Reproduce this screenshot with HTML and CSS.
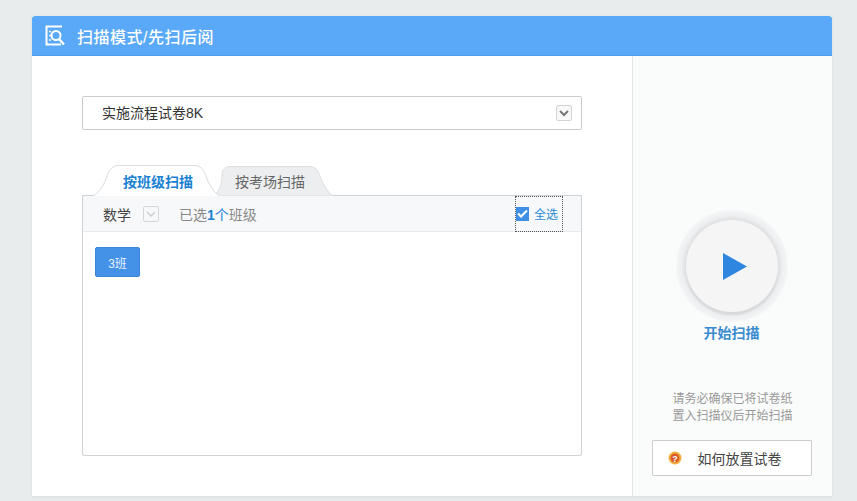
FILE: index.html
```html
<!DOCTYPE html>
<html lang="zh">
<head>
<meta charset="utf-8">
<title>扫描模式</title>
<link rel="stylesheet" href="styles.css">
</head>
<body>
<div class="card">
  <header class="head">
    <svg class="head-icon" width="21" height="21" viewBox="0 0 21 21" fill="none" stroke="#fff">
      <path d="M17 1.500H1.500v18H16" stroke-width="2"/>
      <circle cx="11" cy="10.500" r="4.500" stroke-width="2"/>
      <path d="M14 14l5 5.500" stroke-width="2.400"/>
      <path d="M4 6.500h2M4 10.500h2M4 15h2" stroke-width="1.500"/>
    </svg>
    <h1 class="head-title">扫描模式/先扫后阅</h1>
  </header>
  <div class="body">
    <main class="main">
      <div class="select">
        <span>实施流程试卷8K</span>
        <span class="arrow-box"><svg width="10" height="7" viewBox="0 0 10 7" fill="none" stroke="#777" stroke-width="2"><path d="M1 1l4 4 4-4"/></svg></span>
      </div>
      <div class="tabs">
        <div class="tab tab-idle">
          <svg class="tab-bg" width="120" height="30" viewBox="0 0 120 30"><path d="M0 30C6 26 9 20 9 9 9 3 12 .5 18 .5H96c5 0 8 2 10 7 3 9 7 17 14 22.500z" fill="#eceeef" stroke="#dcdfe1"/></svg>
          <span class="tab-text">按考场扫描</span>
        </div>
        <div class="tab tab-active">
          <svg class="tab-bg" width="126" height="31" viewBox="0 0 126 31"><path d="M0 31C7 27 11 20 14 11 16 4 20 .5 26 .5H101c6 0 9 3 11 8 3 9 7 17 14 22.500" fill="#fff" stroke="#d8dcdf"/></svg>
          <span class="tab-text">按班级扫描</span>
        </div>
      </div>
      <section class="panel">
        <div class="toolbar">
          <span class="subject">数学</span>
          <span class="mini-box"><svg width="10" height="6" viewBox="0 0 10 6" fill="none" stroke="#c9ced2" stroke-width="1.300"><path d="M1 1l4 4 4-4"/></svg></span>
          <span class="count">已选<b class="num">1</b><span class="unit">个</span>班级</span>
          <label class="all">
            <span class="check"><svg width="11" height="9" viewBox="0 0 11 9" fill="none" stroke="#fff" stroke-width="2"><path d="M1 4.500l3 3 6-6"/></svg></span>
            <span>全选</span>
          </label>
        </div>
        <div class="classes"><button class="class-btn">3班</button></div>
      </section>
    </main>
    <aside class="side">
      <div class="ring">
        <div class="disc">
          <svg width="24" height="27" viewBox="0 0 24 27"><path d="M0 0l24 13.500L0 27z" fill="#2f86e0"/></svg>
        </div>
      </div>
      <div class="start">开始扫描</div>
      <p class="note">请务必确保已将试卷纸<br>置入扫描仪后开始扫描</p>
      <button class="howto">
        <svg width="14" height="14" viewBox="0 0 14 14"><circle cx="7" cy="7" r="6.500" fill="#f2b040"/><circle cx="7" cy="7" r="4.500" fill="#dc5a2a"/><text x="7" y="10.500" font-size="9" font-weight="700" text-anchor="middle" fill="#fff" font-family="Liberation Sans">?</text></svg>
        <span>如何放置试卷</span>
      </button>
    </aside>
  </div>
</div>
</body>
</html>
```
FILE: styles.css
```css
* { box-sizing: border-box; }
html, body { margin: 0; height: 501px; overflow: hidden; }
body {
  background: #e9eced;
  font-family: "Liberation Sans", "Noto Sans CJK SC", sans-serif;
  font-size: 14px;
  color: #444;
  padding: 16px 25px 0 32px;
}
.card {
  width: 800px;
  height: 480px;
  display: flex;
  flex-direction: column;
  background: #fff;
  box-shadow: 0 1px 3px rgba(0,0,0,.08);
}
.head {
  height: 40px;
  flex: none;
  display: flex;
  align-items: center;
  padding-left: 13px;
  gap: 11px;
  background: #5aa9f8;
  border-radius: 3px 3px 0 0;
  border-bottom: 1px solid #4f9eea;
}
.head-title { margin: 0; color: #fff; font-size: 16px; font-weight: 500; letter-spacing: .5px; }
.body { flex: 1; display: flex; min-height: 0; }
.main { width: 600px; padding: 40px 50px 0; }
.select {
  height: 34px;
  display: flex;
  align-items: center;
  justify-content: space-between;
  padding: 0 9px 2px 19px;
  border: 1px solid #c9cccf;
  border-radius: 2px;
  color: #333;
}
.arrow-box {
  width: 16px;
  height: 16px;
  margin-top: 2px;
  display: flex;
  align-items: center;
  justify-content: center;
  border: 1px solid #d2d4d6;
  border-radius: 2px;
  background: #f9f9f9;
}
.tabs {
  display: flex;
  height: 31px;
  margin-top: 35px;
  margin-bottom: -1px;
  padding-left: 11px;
  position: relative;
  z-index: 1;
}
.tab { position: relative; display: flex; align-items: center; justify-content: center; }
.tab-bg { position: absolute; left: 0; bottom: 0; }
.tab-text { position: relative; }
.tab-active { order: 1; width: 126px; padding-left: 4px; z-index: 2; color: #1b82d2; font-weight: 700; }
.tab-idle { order: 2; width: 120px; margin-left: -6px; padding-right: 6px; color: #666; }
.panel { height: 261px; border: 1px solid #cfd3d6; border-radius: 0 0 2px 2px; }
.toolbar {
  height: 36px;
  display: flex;
  align-items: center;
  padding-left: 20px;
  background: #f7f8fa;
  border-bottom: 1px solid #e8eaec;
  position: relative;
}
.subject { color: #444; }
.mini-box {
  width: 16px;
  height: 16px;
  margin-left: 12px;
  display: flex;
  align-items: center;
  justify-content: center;
  border: 1px solid #d5d8db;
  border-radius: 2px;
}
.count { margin-left: 20px; color: #888; }
.num { color: #1b82d2; }
.unit { color: #1b82d2; }
.all {
  margin-left: auto;
  margin-right: 18px;
  width: 48px;
  height: 36px;
  display: flex;
  align-items: center;
  gap: 5px;
  border: 1px dotted #555;
  color: #2a8ad6;
  font-size: 12px;
}
.check {
  width: 13px;
  height: 14px;
  display: flex;
  align-items: center;
  justify-content: center;
  background: #3f8fe6;
}
.classes { padding: 15px 12px; }
.class-btn {
  width: 45px;
  height: 30px;
  padding: 0;
  border: 1px solid #3c87dc;
  border-radius: 2px;
  background: #4491e8;
  color: #e8f2fc;
  font: 12px "Liberation Sans", "Noto Sans CJK SC", sans-serif;
}
.side {
  width: 200px;
  background: #fafbfb;
  border-left: 1px solid #e3e5e7;
  display: flex;
  flex-direction: column;
  align-items: center;
}
.ring {
  margin: 154px 2px 0 0;
  width: 112px;
  height: 112px;
  border-radius: 50%;
  background: radial-gradient(circle closest-side, #e0e2e4 0, #e0e2e4 84%, #eeeff1 90%, #f2f3f4 97%, #f6f7f8 100%);
  display: flex;
  align-items: center;
  justify-content: center;
}
.disc {
  width: 92px;
  height: 92px;
  border-radius: 50%;
  background: #f5f5f6;
  box-shadow: 0 3px 2px #d8dadc;
  display: flex;
  align-items: center;
  justify-content: center;
  padding-left: 6px;
}
.start { margin: 1px 2px 0 0; color: #3a8cd0; font-weight: 700; line-height: 20px; }
.note { margin: 48px 0 0; text-align: center; color: #999; font-size: 12px; line-height: 17px; }
.howto {
  margin: 15px 2px 0 0;
  width: 160px;
  height: 36px;
  flex: none;
  display: flex;
  align-items: center;
  padding: 0 0 0 15px;
  gap: 16px;
  background: #fff;
  border: 1px solid #ccc;
  border-radius: 1px;
  color: #444;
  font: 14px "Liberation Sans", "Noto Sans CJK SC", sans-serif;
}
```
